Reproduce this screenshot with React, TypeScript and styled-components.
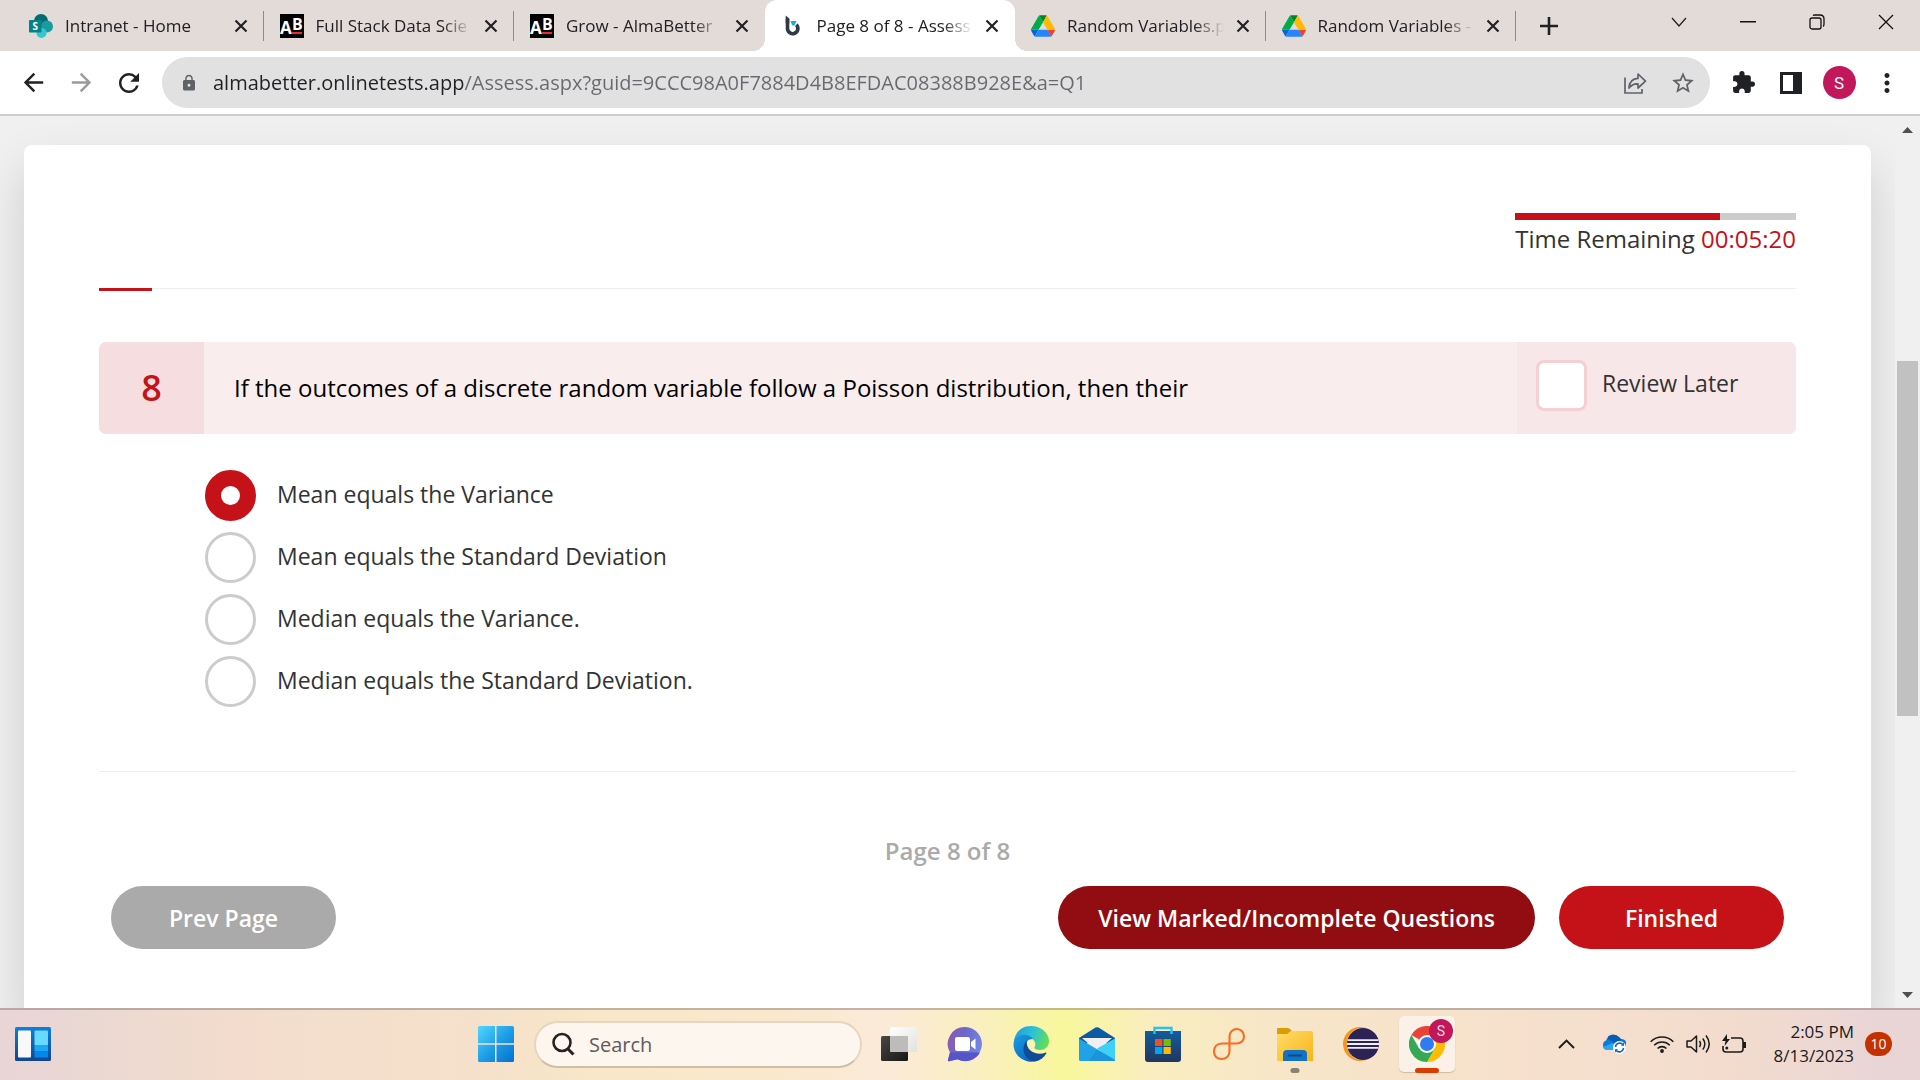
import React, { useState } from "react";
import styled, { createGlobalStyle, css } from "styled-components";
import {
  MdArrowBack,
  MdArrowForward,
  MdExtension,
  MdLock,
  MdMoreVert,
  MdRefresh,
  MdStarBorder,
} from "react-icons/md";

const red = "#c41218";
const uiFont = '"Open Sans", "Noto Sans", sans-serif';

const GlobalStyle = createGlobalStyle`
  *, *::before, *::after { box-sizing: border-box; }
  body { margin: 0; font-family: ${uiFont}; color: #333; background: #f0f0f0; }
  button, input { font: inherit; color: inherit; margin: 0; }
  button { border: 0; padding: 0; background: none; cursor: pointer; }
  svg { display: block; flex: none; }
`;

const Screen = styled.div`
  display: flex;
  flex-direction: column;
  height: 100vh;
  overflow: hidden;
`;

/* ---------- browser chrome ---------- */

const TabBar = styled.header`
  display: flex;
  flex: none;
  height: 51px;
  padding-left: 13px;
  background: #e3dbd8;
`;

const TabStrip = styled.nav`
  display: flex;
  flex: 0 1 1503px;
  min-width: 0;
`;

const flare = css`
  content: "";
  position: absolute;
  bottom: 0;
  width: 12px;
  height: 12px;
`;

const Tab = styled.div<{ $active?: boolean; $divider?: boolean }>`
  position: relative;
  display: flex;
  flex: 1 1 0;
  align-items: center;
  gap: 12px;
  min-width: 0;
  padding: 0 16px;
  font-size: 17px;
  color: #202124;

  ${(p) =>
    p.$divider &&
    css`
      background: linear-gradient(#8f8a88, #8f8a88) right center / 1px 30px no-repeat;
    `}

  ${(p) =>
    p.$active &&
    css`
      background: #fff;
      border-radius: 12px 12px 0 0;
      &::before {
        ${flare}
        right: 100%;
        background: radial-gradient(circle at 0 0, transparent 12px, #fff 12px);
      }
      &::after {
        ${flare}
        left: 100%;
        background: radial-gradient(circle at 100% 0, transparent 12px, #fff 12px);
      }
    `}
`;

const TabTitle = styled.span`
  flex: 1;
  min-width: 0;
  overflow: hidden;
  white-space: nowrap;
  line-height: 24px;
  mask-image: linear-gradient(90deg, #000 calc(100% - 30px), transparent);
`;

const NewTab = styled.button`
  display: grid;
  place-items: center;
  width: 66px;
`;

const WindowControls = styled.div`
  display: flex;
  height: 43px;
  margin-left: auto;
`;

const WindowButton = styled.button`
  display: grid;
  place-items: center;
  width: 69px;
`;

const Toolbar = styled.div`
  display: flex;
  flex: none;
  align-items: center;
  gap: 9px;
  height: 65px;
  padding: 0 9px;
  background: #fff;
  border-bottom: 2px solid #cdcdcd;
`;

const ButtonGroup = styled.div`
  display: flex;
  flex: none;
`;

const ToolButton = styled.button<{ $muted?: boolean }>`
  display: grid;
  place-items: center;
  width: 48px;
  height: 48px;
  color: ${(p) => (p.$muted ? "#9b9b9b" : "#202124")};
`;

const Omnibox = styled.div`
  display: flex;
  flex: 1;
  align-items: center;
  gap: 15px;
  min-width: 0;
  height: 51px;
  padding: 0 3px 0 18px;
  border-radius: 26px;
  background: #e1e1e1;
  color: #5f6368;

  ${ToolButton} {
    color: #5f6368;
  }
`;

const Address = styled.input`
  flex: 1;
  min-width: 0;
  height: 32px;
  padding: 0;
  border: 0;
  outline: 0;
  font-size: 20px;
  color: #5f6368;
  background: linear-gradient(90deg, #202124 251px, #66696d 251px);
  background-clip: text;
  -webkit-background-clip: text;
  -webkit-text-fill-color: transparent;
`;

const Avatar = styled.span`
  display: grid;
  place-items: center;
  width: 33px;
  height: 33px;
  border-radius: 50%;
  background: #c2185b;
  color: #fff;
  font: 17px/24px Roboto, sans-serif;
`;

/* ---------- test page ---------- */

const Viewport = styled.div`
  display: flex;
  flex: 1;
  min-height: 0;
  background: #f0f0f0;
`;

const PageArea = styled.div`
  flex: 1;
  display: flex;
  min-width: 0;
  padding: 29px 24px 0;
  overflow: hidden;
`;

const Card = styled.main`
  flex: 1;
  min-width: 0;
  padding: 68px 75px 0;
  border-radius: 8px 8px 0 0;
  background: #fff;
  box-shadow: 0 24px 48px rgba(0, 0, 0, 0.15);
`;

const Timer = styled.div`
  display: flex;
  flex-direction: column;
  gap: 3px;
  width: fit-content;
  margin-left: auto;
  font-size: 24px;
  line-height: 32px;
`;

const TimerTrack = styled.div`
  height: 7px;
  background: #ccc;
`;

const TimerFill = styled.div`
  width: 73%;
  height: 100%;
  background: ${red};
`;

const TimeLeft = styled.span`
  color: ${red};
  font-weight: 500;
`;

const ProgressRule = styled.div`
  height: 3px;
  margin: 33px 0 51px;
  background: linear-gradient(#eee, #eee) top / 100% 1px no-repeat;
`;

const ProgressMark = styled.div`
  width: 53px;
  height: 3px;
  background: ${red};
`;

const Question = styled.section`
  display: flex;
  min-height: 92px;
  border-radius: 7px;
  overflow: hidden;
  background: #faeded;
`;

const QuestionNumber = styled.div`
  display: grid;
  place-items: center;
  width: 105px;
  padding-bottom: 2px;
  background: #f6dde0;
  color: ${red};
  font-size: 36px;
  font-weight: 600;
`;

const QuestionText = styled.h1`
  flex: 1;
  align-self: center;
  margin: 0;
  padding: 0 30px;
  color: #000;
  font-size: 24px;
  font-weight: 400;
  line-height: 32px;
`;

const ReviewCell = styled.div`
  display: flex;
  align-items: center;
  gap: 15px;
  width: 279px;
  padding: 0 0 6px 19px;
  background: #f8e7e8;
`;

const CheckBox = styled.input`
  flex: none;
  appearance: none;
  width: 51px;
  height: 51px;
  border: 3px solid #f5cfd2;
  border-radius: 8px;
  background: #fff;
  &:checked {
    background: ${red};
  }
`;

const ChoiceLabel = styled.label`
  padding-bottom: 4px;
  font-size: 23px;
  line-height: 32px;
`;

const Options = styled.div`
  display: flex;
  flex-direction: column;
  gap: 11px;
  margin: 36px 0 64px;
  padding-left: 106px;
`;

const Option = styled.div`
  display: flex;
  align-items: center;
  gap: 21px;
`;

const Radio = styled.input`
  flex: none;
  appearance: none;
  width: 51px;
  height: 51px;
  border: 3px solid #ccc;
  border-radius: 50%;
  background: #fff;
  &:checked {
    border: 16px solid ${red};
  }
`;

const Divider = styled.hr`
  height: 1px;
  margin: 0;
  border: 0;
  background: #eee;
`;

const PageCount = styled.p`
  margin: 63px 0 19px;
  color: #aaa;
  font-size: 24px;
  font-weight: 600;
  line-height: 32px;
  text-align: center;
`;

const Actions = styled.div`
  display: flex;
  gap: 24px;
  padding: 0 12px;
`;

const ActionButton = styled.button<{ $color: string; $first?: boolean }>`
  min-width: 225px;
  height: 63px;
  padding: 0 40px;
  border-radius: 32px;
  margin-right: ${(p) => (p.$first ? "auto" : "0")};
  background: ${(p) => p.$color};
  color: #fff;
  font-size: 23px;
  font-weight: 600;
  white-space: nowrap;
`;

const ScrollBar = styled.div`
  display: flex;
  flex-direction: column;
  width: 25px;
  padding: 0 2px;
`;

const ScrollArrow = styled.button`
  display: grid;
  place-items: center;
  height: 27px;
`;

const ScrollTrack = styled.div`
  display: grid;
  flex: 1;
  grid-template-rows: 218fr 355fr 265fr;
`;

const ScrollThumb = styled.div`
  grid-row: 2;
  background: #c1c1c1;
`;

/* ---------- taskbar ---------- */

const Taskbar = styled.footer`
  display: grid;
  flex: none;
  grid-template-columns: 1fr auto 1fr;
  align-items: center;
  height: 72px;
  padding: 0 15px 2px;
  border-top: 2px solid rgba(110, 100, 95, 0.4);
  background: linear-gradient(
    90deg,
    #e9d5d6 0%,
    #ead8d2 5%,
    #f3dccd 12%,
    #f5e1cb 25%,
    #f8e7c8 31%,
    #f9e8cb 40%,
    #fbead8 46%,
    #f9efc0 51%,
    #f8f79c 55.5%,
    #f9edc0 60%,
    #f7e5c9 68%,
    #f6e0cd 80%,
    #f3dccd 90%,
    #e9d5d6 98%
  );
  background-origin: border-box;
`;

const AppRow = styled.div`
  display: flex;
  align-items: center;
  gap: 20px;
  padding-left: 18px;
`;

const SearchBox = styled.label`
  display: flex;
  align-items: center;
  gap: 14px;
  width: 328px;
  height: 47px;
  padding: 0 16px;
  border: 2px solid #e6d6bf;
  border-bottom-color: #cfbfa8;
  border-radius: 24px;
  background: #fdf6ef;
`;

const SearchInput = styled.input`
  flex: 1;
  min-width: 0;
  padding: 0;
  border: 0;
  outline: 0;
  background: transparent;
  font-size: 20px;
  &::placeholder {
    color: #5f5b58;
    opacity: 1;
  }
`;

const Apps = styled.div`
  display: flex;
  margin-left: -16px;
`;

const AppButton = styled.button<{ $open?: boolean; $current?: boolean }>`
  position: relative;
  display: grid;
  place-items: center;
  width: 56px;
  height: 56px;
  margin: 0 5px;
  border-radius: 5px;
  ${(p) =>
    p.$current &&
    css`
      background: #fbf1e8;
      box-shadow: 0 1px 1px rgba(120, 90, 60, 0.3);
    `}
  ${(p) =>
    (p.$open || p.$current) &&
    css`
      &::after {
        content: "";
        position: absolute;
        bottom: -1px;
        left: 50%;
        width: ${p.$current ? 24 : 9}px;
        height: 5px;
        border-radius: 3px;
        transform: translateX(-50%);
        background: ${p.$current ? "#da3b01" : "#8a8074"};
      }
    `}
`;

const ProfileBadge = styled.span`
  position: absolute;
  top: 3px;
  right: 2px;
  width: 24px;
  height: 24px;
  border-radius: 50%;
  background: #c2185b;
  color: #f7d3e0;
  font: 14px/24px Roboto, sans-serif;
  text-align: center;
`;

const IconButton = styled.button`
  display: grid;
  place-items: center;
  justify-self: start;
`;

const Tray = styled.div`
  display: flex;
  align-items: center;
  justify-content: flex-end;
  gap: 11px;
  padding-right: 13px;
  color: #1b1b1b;
`;

const TrayIcons = styled.div`
  display: flex;
  align-items: center;
  gap: 12px;
  margin-right: 16px;
`;

const TrayButton = styled.button<{ $after?: number }>`
  display: grid;
  place-items: center;
  width: 24px;
  height: 28px;
  margin-right: ${(p) => p.$after ?? 0}px;
`;

const Clock = styled.time`
  font-size: 17px;
  line-height: 24px;
  text-align: right;
  white-space: pre-line;
`;

const Notice = styled.span`
  width: 27px;
  height: 24px;
  border-radius: 12px;
  background: #c53201;
  color: #fff;
  font-size: 14px;
  line-height: 24px;
  text-align: center;
`;

/* ---------- drawings ---------- */

const SharePointIcon = () => (
  <svg width="24" height="24" viewBox="0 0 24 24" aria-hidden="true">
    <circle cx="12" cy="7" r="7" fill="#036c70" />
    <circle cx="18" cy="12.500" r="6" fill="#1a9ba1" />
    <circle cx="12.500" cy="19" r="5" fill="#37c6d0" />
    <rect y="6" width="12.500" height="12.500" rx="1" fill="#038387" />
    <text x="6.200" y="16" fontSize="10" fontWeight="700" fill="#fff" textAnchor="middle">S</text>
  </svg>
);

const AlmaIcon = () => (
  <svg width="24" height="24" viewBox="0 0 24 24" aria-hidden="true">
    <rect width="24" height="24" fill="#000" />
    <text x="0" y="20" fontSize="17" fontWeight="700" fill="#fff">A</text>
    <text x="12" y="16" fontSize="16" fontWeight="700" fill="#fff">B</text>
    <rect x="12" y="18" width="10" height="2" fill="#ee2737" />
  </svg>
);

const AssessIcon = () => (
  <svg width="24" height="24" viewBox="0 0 24 24" aria-hidden="true">
    <path d="M6.500 5v9.500a5.200 5.200 0 1 0 8.800-3.800" fill="none" stroke="#2f3a45" strokeWidth="3.600" />
    <path d="M4.700 1.500l3.600 3v5H4.700z" fill="#2f3a45" />
    <path d="M9.500 7h6l-2.200 4.500h-2z" fill="#1ba8dc" />
  </svg>
);

const DriveIcon = () => (
  <svg width="24" height="24" viewBox="0 0 87.300 78" aria-hidden="true">
    <path d="M6.600 66.850l3.850 6.650c.8 1.400 1.950 2.500 3.300 3.300L27.500 53H0c0 1.550.4 3.100 1.200 4.500z" fill="#0066da" />
    <path d="M43.650 25L29.900 1.200c-1.350.8-2.500 1.900-3.300 3.300L1.200 48.500C.4 49.900 0 51.450 0 53h27.500z" fill="#00ac47" />
    <path d="M73.550 76.800c1.350-.8 2.500-1.900 3.300-3.300l1.600-2.750L86.100 57.500c.8-1.400 1.200-2.950 1.200-4.500H59.800l5.850 11.500z" fill="#ea4335" />
    <path d="M43.650 25L57.400 1.200C56.050.4 54.500 0 52.900 0H34.400c-1.600 0-3.150.45-4.500 1.200z" fill="#00832d" />
    <path d="M59.800 53H27.500L13.750 76.800c1.350.8 2.900 1.200 4.500 1.200h50.800c1.600 0 3.150-.45 4.500-1.200z" fill="#2684fc" />
    <path d="M73.400 26.500L60.700 4.500c-.8-1.400-1.950-2.500-3.300-3.300L43.650 25 59.800 53h27.450c0-1.550-.4-3.100-1.200-4.500z" fill="#ffba00" />
  </svg>
);

const CrossIcon = () => (
  <svg width="14" height="14" viewBox="0 0 14 14" fill="none" stroke="#202124" strokeWidth="2.200" aria-hidden="true">
    <path d="M1.500 1.500l11 11M12.500 1.500l-11 11" />
  </svg>
);

const PlusIcon = () => (
  <svg width="18" height="18" viewBox="0 0 18 18" stroke="#202124" strokeWidth="2.600" aria-hidden="true">
    <path d="M9 0v18M0 9h18" />
  </svg>
);

const ShareIcon = () => (
  <svg width="24" height="24" viewBox="0 0 24 24" fill="none" stroke="#5f6368" strokeWidth="1.700" aria-hidden="true">
    <path d="M2 6.500v15.500h17v-4" />
    <path d="M6 17c.3-6 3.200-9.300 9-9.600V3l7.500 7.200L15 17v-4.200c-4-.2-6.800 1-9 4.200z" strokeLinejoin="round" />
  </svg>
);

const SidePanelIcon = () => (
  <svg width="22" height="22" viewBox="0 0 22 22" aria-hidden="true">
    <path d="M0 0h22v22H0zM3 3v16h10V3z" fill="#202124" fillRule="evenodd" />
  </svg>
);

const WidgetsIcon = () => (
  <svg width="36" height="34" viewBox="0 0 36 34" aria-hidden="true">
    <defs>
      <linearGradient id="widgetFrame" x1="0" y1="0" x2="0" y2="1">
        <stop offset="0" stopColor="#0c80dc" />
        <stop offset="1" stopColor="#10478c" />
      </linearGradient>
    </defs>
    <rect width="36" height="34" rx="1.500" fill="url(#widgetFrame)" />
    <rect x="3" y="3.500" width="13" height="27" rx="1" fill="#f8f8f8" />
    <rect x="19.500" y="3.500" width="13.500" height="15" rx="1" fill="#68d9ff" />
    <rect x="19.500" y="18.500" width="13.500" height="6" fill="#1da8f7" />
    <rect x="19.500" y="24.500" width="13.500" height="6" fill="#0588ea" />
  </svg>
);

const WindowsIcon = () => (
  <svg width="36" height="36" viewBox="0 0 36 36" aria-hidden="true">
    <defs>
      <linearGradient id="winBlue" gradientUnits="userSpaceOnUse" x1="0" y1="0" x2="36" y2="36">
        <stop offset="0" stopColor="#50d8ff" />
        <stop offset=".5" stopColor="#209fe8" />
        <stop offset="1" stopColor="#0071cf" />
      </linearGradient>
    </defs>
    <path d="M0 1.500Q0 0 1.500 0h15.500v17.300H0zM18.500 0h15.500Q36 0 36 1.500v15.800H18.500zM0 18.800h17V36H1.500Q0 36 0 34.500zM18.500 18.800H36v15.700q0 1.500-1.500 1.500h-16z" fill="url(#winBlue)" />
  </svg>
);

const SearchIcon = () => (
  <svg width="23" height="24" viewBox="0 0 23 24" fill="none" stroke="#262423" strokeWidth="2.600" aria-hidden="true">
    <circle cx="10" cy="10.500" r="8.500" />
    <path d="M15.500 16.500l6 6" strokeWidth="3" />
  </svg>
);

const TaskViewIcon = () => (
  <svg width="36" height="34" viewBox="0 0 36 34" aria-hidden="true">
    <defs>
      <linearGradient id="paneDark" x1="0" y1="0" x2="1" y2="1">
        <stop offset="0" stopColor="#4a4845" />
        <stop offset="1" stopColor="#161616" />
      </linearGradient>
      <linearGradient id="paneLight" x1="0" y1="0" x2="1" y2="1">
        <stop offset="0" stopColor="#ffffff" />
        <stop offset="1" stopColor="#e2e1e0" />
      </linearGradient>
    </defs>
    <rect y="9" width="27" height="25" rx="1.500" fill="url(#paneDark)" />
    <rect x="9" y="0" width="27" height="25" rx="1.500" fill="url(#paneLight)" />
    <path d="M9 9h18v16H10.500Q9 25 9 23.500z" fill="#bdbcbb" />
  </svg>
);

const ChatIcon = () => (
  <svg width="36" height="36" viewBox="0 0 36 36" aria-hidden="true">
    <defs>
      <linearGradient id="chatPurple" x1="0" y1=".2" x2="1" y2=".4">
        <stop offset="0" stopColor="#8a5cae" />
        <stop offset=".5" stopColor="#6c68cf" />
        <stop offset="1" stopColor="#7386e4" />
      </linearGradient>
    </defs>
    <path d="M18 1a17 17 0 1 1-7.500 32.300L2 35.200q-1.500.2-1-1.400L3 26.500A17 17 0 0 1 18 1z" fill="url(#chatPurple)" />
    <path d="M3 26.500h30A17 17 0 0 1 10.500 33.300L2 35.200q-1.500.2-1-1.400z" fill="#5554c9" />
    <rect x="8" y="11" width="15" height="14" rx="2" fill="#fff" />
    <path d="M24 16l4.500-3.500v11L24 20z" fill="#fff" />
  </svg>
);

const EdgeIcon = () => (
  <svg width="36" height="36" viewBox="0 0 36 36" aria-hidden="true">
    <defs>
      <linearGradient id="edgeTop" x1="0" y1=".3" x2="1" y2=".6">
        <stop offset="0" stopColor="#1f9fe0" />
        <stop offset=".5" stopColor="#2cc3d4" />
        <stop offset="1" stopColor="#67df4d" />
      </linearGradient>
      <linearGradient id="edgeLow" x1="0" y1="0" x2=".7" y2="1">
        <stop offset="0" stopColor="#1b9de2" />
        <stop offset="1" stopColor="#0868c2" />
      </linearGradient>
    </defs>
    <path d="M1 15C2 6 9 0 18 0c10 0 18 7 18 15 0 6-4.500 9-9 9-4 0-6-1.500-5.500-3 1.500-1.500 1.200-5-1.500-7.500C16 10 6 9.500 1 15z" fill="url(#edgeTop)" />
    <path d="M1 14.500C5 7.500 15 7 20 13c-4-.5-8 3-8 8 0 8 5 13.500 10.500 14.300A18 18 0 0 1 .500 20q0-3 .5-5.500z" fill="url(#edgeLow)" />
    <path d="M14 14.500C6.500 22 12 35 22 35.500c5-1 9-4 11.300-8 .3-.7-.3-1.200-1-.8C24 30 12 25 14 14.500z" fill="#114a95" />
  </svg>
);

const MailIcon = () => (
  <svg width="36" height="34" viewBox="0 0 36 34" aria-hidden="true">
    <path d="M0 11L16.500.6Q18 0 19.500.6L36 11v5H0z" fill="#0b5aa8" />
    <path d="M3 11h30L18 24z" fill="#f0f0f2" />
    <path d="M36 11.500v21Q36 34 34.500 34L18 21.500z" fill="#3fd0f8" />
    <path d="M0 11.500L36 33q0 1-1.500 1h-33Q0 34 0 32.500z" fill="#1fa3e6" />
    <path d="M18 22.300L36 33v1H10z" fill="#178cd6" opacity=".6" />
  </svg>
);

const StoreIcon = () => (
  <svg width="36" height="36" viewBox="0 0 36 36" aria-hidden="true">
    <defs>
      <linearGradient id="bagBlue" x1="0" y1="0" x2="0" y2="1">
        <stop offset="0" stopColor="#125d9f" />
        <stop offset="1" stopColor="#20375f" />
      </linearGradient>
    </defs>
    <path d="M0 5h36v28q0 3-3 3H3q-3 0-3-3z" fill="url(#bagBlue)" />
    <path d="M9.500 8V2h17v6" fill="none" stroke="#2bc0f2" strokeWidth="2.400" />
    <path d="M10 13h7.300v7H10z" fill="#f25022" />
    <path d="M18.500 13h7.300v7h-7.300z" fill="#7fba00" />
    <path d="M10 21h7.300v7H10z" fill="#00a4ef" />
    <path d="M18.500 21h7.300v7h-7.300z" fill="#ffb900" />
  </svg>
);

const LoopIcon = () => (
  <svg width="34" height="34" viewBox="0 0 34 34" fill="none" stroke="#fb6a22" strokeWidth="2.100" aria-hidden="true">
    <path d="M10 16.500H24.500c4.500 0 7.500-3 7.500-7s-3-7.500-7-7.500-7.500 3-7.500 7.500V24c0 5-3.500 8-8 8S2 29 2 24.500s3-8 8-8z" />
  </svg>
);

const FolderIcon = () => (
  <svg width="36" height="34" viewBox="0 0 36 34" aria-hidden="true">
    <defs>
      <linearGradient id="folderYellow" x1="0" y1="0" x2="1" y2="1">
        <stop offset="0" stopColor="#ffdc69" />
        <stop offset="1" stopColor="#f8b419" />
      </linearGradient>
    </defs>
    <path d="M0 2Q0 1 1 1h10q1.500 0 4 3v6H0z" fill="#dc9c04" />
    <path d="M0 7h10l4-3h20q2 0 2 2v28H0z" fill="url(#folderYellow)" />
    <path d="M6 34v-7q0-4 4-4h16q4 0 4 4v7z" fill="#1272c5" />
    <path d="M11 28.500h14" stroke="#094a8d" strokeWidth="2" />
  </svg>
);

const EclipseIcon = () => (
  <svg width="36" height="34" viewBox="0 0 36 34" aria-hidden="true">
    <circle cx="17" cy="17" r="17" fill="#f7941e" />
    <circle cx="20" cy="17" r="16.200" fill="#fbe8cf" />
    <circle cx="20" cy="17" r="16" fill="#2c2255" />
    <path d="M4.500 13.200h31M4 17h32M4.500 20.800h31" stroke="#f2eef9" strokeWidth="1.800" />
  </svg>
);

const ChromeIcon = () => (
  <svg width="36" height="36" viewBox="0 0 36 36" aria-hidden="true">
    <path d="M18 18L2.400 9a18 18 0 0 1 31.200 0z" fill="#ea4335" />
    <path d="M18 18V9h15.600A18 18 0 0 1 18 36l7.800-13.500z" fill="#fbbc04" />
    <path d="M18 18l7.800 4.500L18 36A18 18 0 0 1 2.400 9l7.800 13.500z" fill="#34a853" />
    <circle cx="18" cy="18" r="9" fill="#fff" />
    <circle cx="18" cy="18" r="7" fill="#2e7df0" />
  </svg>
);

const CaretUpIcon = () => (
  <svg width="17" height="10" viewBox="0 0 17 10" fill="none" stroke="currentColor" strokeWidth="1.900" aria-hidden="true">
    <path d="M1 9l7.500-7.500L16 9" />
  </svg>
);

const CloudIcon = () => (
  <svg width="24" height="20" viewBox="0 0 24 20" aria-hidden="true">
    <path d="M5 16a5 5 0 0 1-1-9.500A8 8 0 0 1 18.500 5 5.500 5.500 0 0 1 20 16z" fill="#0c7cd8" />
    <path d="M6 2.500Q12-2 17.500 3.500L20 6l-8 3-6-4z" fill="#0a5bb4" />
    <path d="M1 13l10-4 7 7H5q-3 0-4-3z" fill="#2aa6ee" />
    <circle cx="17.500" cy="13.500" r="6.500" fill="#fff" />
    <path d="M13.500 13a4.200 4.200 0 0 1 7.500-2.200M21.500 14a4.200 4.200 0 0 1-7.500 2.200" fill="none" stroke="#0b66bd" strokeWidth="1.600" />
    <path d="M22 8.500v3.300h-3zM13 18.500v-3.300h3z" fill="#0b66bd" />
  </svg>
);

const WifiIcon = () => (
  <svg width="24" height="18" viewBox="0 0 24 18" fill="none" stroke="currentColor" strokeWidth="1.600" aria-hidden="true">
    <path d="M.7 6.700a16 16 0 0 1 22.600 0M4.200 10.200a11 11 0 0 1 15.600 0M7.600 13.500a6.200 6.200 0 0 1 8.800 0" />
    <circle cx="12" cy="16" r="1.900" fill="currentColor" stroke="none" />
  </svg>
);

const VolumeIcon = () => (
  <svg width="25" height="20" viewBox="0 0 25 20" fill="none" stroke="currentColor" strokeWidth="1.500" aria-hidden="true">
    <path d="M1 7h4l5.500-5v16L5 13H1z" strokeLinejoin="round" />
    <path d="M13.500 7q2 3 0 6M16.800 4.500q4 5.500 0 11M20 1.500q6.500 8.500 0 17" />
  </svg>
);

const BatteryIcon = () => (
  <svg width="25" height="20" viewBox="0 0 25 20" fill="none" stroke="currentColor" strokeWidth="1.600" aria-hidden="true">
    <path d="M9 4h9q3 0 3 3v8q0 3-3 3H4q-3 0-3-3v-3" />
    <path d="M22.500 8v6" strokeWidth="3" />
    <path d="M5 0L0 7h3.500L2.500 12 8 5H5z" fill="currentColor" stroke="none" />
    <circle cx="4.800" cy="14" r="1.500" fill="currentColor" stroke="none" />
  </svg>
);

/* ---------- content ---------- */

const tabs = [
  { title: "Intranet - Home", icon: <SharePointIcon />, divider: true },
  { title: "Full Stack Data Scie", icon: <AlmaIcon />, divider: true },
  { title: "Grow - AlmaBetter", icon: <AlmaIcon /> },
  { title: "Page 8 of 8 - Assess", icon: <AssessIcon />, active: true },
  { title: "Random Variables.p", icon: <DriveIcon />, divider: true },
  { title: "Random Variables -", icon: <DriveIcon />, divider: true },
];

const answers = [
  "Mean equals the Variance",
  "Mean equals the Standard Deviation",
  "Median equals the Variance.",
  "Median equals the Standard Deviation.",
];

const apps = [
  { name: "Task view", icon: <TaskViewIcon /> },
  { name: "Chat", icon: <ChatIcon /> },
  { name: "Edge", icon: <EdgeIcon /> },
  { name: "Mail", icon: <MailIcon /> },
  { name: "Store", icon: <StoreIcon /> },
  { name: "Loop", icon: <LoopIcon /> },
  { name: "File Explorer", icon: <FolderIcon />, open: true },
  { name: "Eclipse", icon: <EclipseIcon /> },
];

function BrowserHeader() {
  return (
    <>
      <TabBar>
        <TabStrip>
          {tabs.map((tab) => (
            <Tab key={tab.title} $active={tab.active} $divider={tab.divider}>
              {tab.icon}
              <TabTitle>{tab.title}</TabTitle>
              <button aria-label="Close tab">
                <CrossIcon />
              </button>
            </Tab>
          ))}
        </TabStrip>
        <NewTab aria-label="New tab">
          <PlusIcon />
        </NewTab>
        <WindowControls>
          <WindowButton aria-label="Search tabs">
            <svg width="16" height="10" fill="none" stroke="#222" strokeWidth="1.300">
              <path d="M1 1l7 8 7-8" />
            </svg>
          </WindowButton>
          <WindowButton aria-label="Minimize">
            <svg width="16" height="2">
              <path d="M0 0h16v1.500H0z" fill="#111" />
            </svg>
          </WindowButton>
          <WindowButton aria-label="Restore">
            <svg width="16" height="16" fill="none" stroke="#111" strokeWidth="1.300">
              <rect x="1" y="4" width="11" height="11" rx="2" />
              <path d="M4 1.500Q4.500 1 6 1h5q4 0 4 4v5q0 2-1 2.500" />
            </svg>
          </WindowButton>
          <WindowButton aria-label="Close">
            <svg width="16" height="16" stroke="#111" strokeWidth="1.300">
              <path d="M1 1l14 14M15 1L1 15" />
            </svg>
          </WindowButton>
        </WindowControls>
      </TabBar>
      <Toolbar>
        <ButtonGroup>
          <ToolButton aria-label="Back"><MdArrowBack size={29} /></ToolButton>
          <ToolButton aria-label="Forward" $muted><MdArrowForward size={29} /></ToolButton>
          <ToolButton aria-label="Reload"><MdRefresh size={30} /></ToolButton>
        </ButtonGroup>
        <Omnibox>
          <MdLock size={18} />
          <Address
            aria-label="Address"
            defaultValue="almabetter.onlinetests.app/Assess.aspx?guid=9CCC98A0F7884D4B8EFDAC08388B928E&a=Q1"
          />
          <ButtonGroup>
            <ToolButton aria-label="Share"><ShareIcon /></ToolButton>
            <ToolButton aria-label="Bookmark"><MdStarBorder size={26} /></ToolButton>
          </ButtonGroup>
        </Omnibox>
        <ButtonGroup>
          <ToolButton aria-label="Extensions"><MdExtension size={25} /></ToolButton>
          <ToolButton aria-label="Side panel"><SidePanelIcon /></ToolButton>
          <ToolButton aria-label="Profile"><Avatar>S</Avatar></ToolButton>
          <ToolButton aria-label="Menu"><MdMoreVert size={30} /></ToolButton>
        </ButtonGroup>
      </Toolbar>
    </>
  );
}

function TestPage() {
  const [answer, setAnswer] = useState(0);
  return (
    <Card>
      <Timer>
        <TimerTrack>
          <TimerFill />
        </TimerTrack>
        <div>
          Time Remaining <TimeLeft>00:05:20</TimeLeft>
        </div>
      </Timer>
      <ProgressRule>
        <ProgressMark />
      </ProgressRule>
      <Question>
        <QuestionNumber>8</QuestionNumber>
        <QuestionText>
          If the outcomes of a discrete random variable follow a Poisson distribution, then their
        </QuestionText>
        <ReviewCell>
          <CheckBox type="checkbox" id="review" />
          <ChoiceLabel htmlFor="review">Review Later</ChoiceLabel>
        </ReviewCell>
      </Question>
      <Options>
        {answers.map((text, i) => (
          <Option key={text}>
            <Radio
              type="radio"
              name="answer"
              id={`answer-${i}`}
              checked={answer === i}
              onChange={() => setAnswer(i)}
            />
            <ChoiceLabel htmlFor={`answer-${i}`}>{text}</ChoiceLabel>
          </Option>
        ))}
      </Options>
      <Divider />
      <PageCount>Page 8 of 8</PageCount>
      <Actions>
        <ActionButton $color="#aaa" $first>Prev Page</ActionButton>
        <ActionButton $color="#920d12">View Marked/Incomplete Questions</ActionButton>
        <ActionButton $color={red}>Finished</ActionButton>
      </Actions>
    </Card>
  );
}

function WindowsTaskbar() {
  return (
    <Taskbar>
      <IconButton aria-label="Widgets"><WidgetsIcon /></IconButton>
      <AppRow>
        <IconButton aria-label="Start"><WindowsIcon /></IconButton>
        <SearchBox>
          <SearchIcon />
          <SearchInput placeholder="Search" aria-label="Search" />
        </SearchBox>
        <Apps>
          {apps.map((app) => (
            <AppButton key={app.name} aria-label={app.name} $open={app.open}>
              {app.icon}
            </AppButton>
          ))}
          <AppButton aria-label="Chrome" $current>
            <ChromeIcon />
            <ProfileBadge>S</ProfileBadge>
          </AppButton>
        </Apps>
      </AppRow>
      <Tray>
        <TrayIcons>
          <TrayButton aria-label="Hidden icons" $after={12}><CaretUpIcon /></TrayButton>
          <TrayButton aria-label="OneDrive" $after={12}><CloudIcon /></TrayButton>
          <TrayButton aria-label="Network"><WifiIcon /></TrayButton>
          <TrayButton aria-label="Volume"><VolumeIcon /></TrayButton>
          <TrayButton aria-label="Battery"><BatteryIcon /></TrayButton>
        </TrayIcons>
        <Clock dateTime="2023-08-13T14:05">{"2:05 PM\n8/13/2023"}</Clock>
        <Notice>10</Notice>
      </Tray>
    </Taskbar>
  );
}

export default function App() {
  return (
    <Screen>
      <GlobalStyle />
      <BrowserHeader />
      <Viewport>
        <PageArea>
          <TestPage />
        </PageArea>
        <ScrollBar>
          <ScrollArrow aria-label="Scroll up">
            <svg width="11" height="6"><path d="M5.500 0L11 6H0z" fill="#505050" /></svg>
          </ScrollArrow>
          <ScrollTrack>
            <ScrollThumb />
          </ScrollTrack>
          <ScrollArrow aria-label="Scroll down">
            <svg width="11" height="6"><path d="M0 0h11L5.500 6z" fill="#505050" /></svg>
          </ScrollArrow>
        </ScrollBar>
      </Viewport>
      <WindowsTaskbar />
    </Screen>
  );
}
